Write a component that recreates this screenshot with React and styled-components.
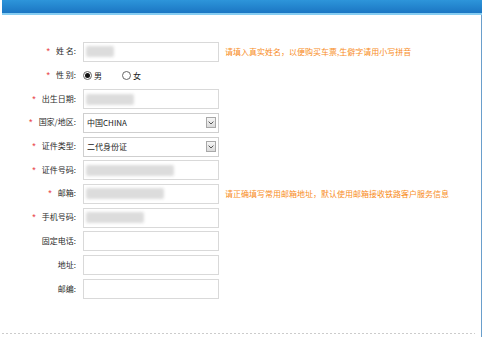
import React from 'react'
import styled, { createGlobalStyle } from 'styled-components'

const GlobalStyle = createGlobalStyle`
    html, body {
        margin: 0;
        padding: 0;
        background: #ffffff;
    }
    body {
        font-family: "Noto Sans CJK SC", "Noto Sans", sans-serif;
        font-size: 8px;
        color: #333;
    }
`

const fields = [
    { label: '姓 名', required: true, type: 'text', blur: 28, hint: '请填入真实姓名，以便购买车票,生僻字请用小写拼音' },
    { label: '性 别', required: true, type: 'radio' },
    { label: '出生日期', required: true, type: 'text', blur: 48 },
    { label: '国家/地区', required: true, type: 'select', value: '中国CHINA' },
    { label: '证件类型', required: true, type: 'select', value: '二代身份证' },
    { label: '证件号码', required: true, type: 'text', blur: 88 },
    { label: '邮箱', required: true, type: 'text', blur: 78, hint: '请正确填写常用邮箱地址，默认使用邮箱接收铁路客户服务信息' },
    { label: '手机号码', required: true, type: 'text', blur: 58 },
    { label: '固定电话', type: 'text' },
    { label: '地址', type: 'text' },
    { label: '邮编', type: 'text' },
]

const App = () => {
    return (
        <>
            <GlobalStyle />
            <Frame>
                <TopBar />
                <Body>
                    <Form>
                        {fields.map(f => (
                            <React.Fragment key={f.label}>
                                <Label>
                                    {f.required && <Star>*</Star>}
                                    {f.label}:
                                </Label>

                                {f.type === 'text' && (
                                    <Input>
                                        {f.blur && <Blurred $width={f.blur} />}
                                    </Input>
                                )}

                                {f.type === 'select' && (
                                    <Select>
                                        <span>{f.value}</span>
                                        <ArrowBox>
                                            <svg width="6" height="4" viewBox="0 0 6 4">
                                                <path d="M0.6 0.6 L3 3 L5.4 0.6" fill="none" stroke="#555" strokeWidth="1" />
                                            </svg>
                                        </ArrowBox>
                                    </Select>
                                )}

                                {f.type === 'radio' && (
                                    <RadioGroup>
                                        <RadioItem>
                                            <RadioCircle $checked />男
                                        </RadioItem>
                                        <RadioItem>
                                            <RadioCircle />女
                                        </RadioItem>
                                    </RadioGroup>
                                )}

                                <Hint>{f.hint || ''}</Hint>
                            </React.Fragment>
                        ))}
                    </Form>
                    <DashedLine />
                </Body>
            </Frame>
        </>
    )
}

const Frame = styled.div`
    margin-left: 2px;
    width: 480px;
    height: 337px;
    display: flex;
    flex-direction: column;
`

const TopBar = styled.div`
    height: 13px;
    flex-shrink: 0;
    background: linear-gradient(#2d95da, #1b76c3);
    border-bottom: 2px solid #86cdf2;
`

const Body = styled.div`
    flex: 1;
    border-right: 1px solid #6a9fcc;
    display: flex;
    flex-direction: column;
`

const Form = styled.div`
    display: grid;
    grid-template-columns: 74px 136px 1fr;
    grid-auto-rows: 23.7px;
    column-gap: 7px;
    align-items: center;
    padding-top: 25px;
`

const Label = styled.div`
    text-align: right;
    white-space: nowrap;
    color: #2a2a2a;
    line-height: 1;
`

const Star = styled.span`
    color: #e8383d;
    font-family: "Liberation Sans", sans-serif;
    font-size: 9px;
    margin-right: 6px;
`

const Input = styled.div`
    height: 20px;
    box-sizing: border-box;
    border: 1px solid #d9d9d9;
    background: #fff;
    display: flex;
    align-items: center;
    padding: 0 2px;
`

const Blurred = styled.span`
    width: ${p => p.$width}px;
    height: 11px;
    background: #dcdcdc;
    border-radius: 2px;
    filter: blur(1.6px);
`

const Select = styled.div`
    height: 20px;
    box-sizing: border-box;
    border: 1px solid #cfcfcf;
    background: #fff;
    display: flex;
    align-items: center;
    justify-content: space-between;
    padding: 0 2px 0 3px;
    color: #222;
    line-height: 1;
`

const ArrowBox = styled.span`
    width: 10px;
    height: 11px;
    box-sizing: border-box;
    border: 1px solid #a8a8a8;
    background: linear-gradient(#f6f6f6, #dadada);
    display: flex;
    align-items: center;
    justify-content: center;
`

const RadioGroup = styled.div`
    display: flex;
    align-items: center;
    gap: 20px;
    line-height: 1;
    color: #222;
`

const RadioItem = styled.label`
    display: flex;
    align-items: center;
    gap: 2px;
`

const RadioCircle = styled.span`
    width: 9px;
    height: 9px;
    box-sizing: border-box;
    border-radius: 50%;
    border: 1px solid #666;
    background: #fff;
    display: flex;
    align-items: center;
    justify-content: center;

    &::after {
        content: '';
        width: 5px;
        height: 5px;
        border-radius: 50%;
        background: ${p => (p.$checked ? '#111' : 'transparent')};
    }
`

const Hint = styled.div`
    color: #f88c1c;
    white-space: nowrap;
    line-height: 1;
    margin-left: -1px;
`

const DashedLine = styled.div`
    margin-top: auto;
    margin-bottom: 3px;
    margin-right: 6px;
    height: 1.5px;
    background: repeating-linear-gradient(to right, #cccccc 0 2px, transparent 2px 4px);
`

export default App
